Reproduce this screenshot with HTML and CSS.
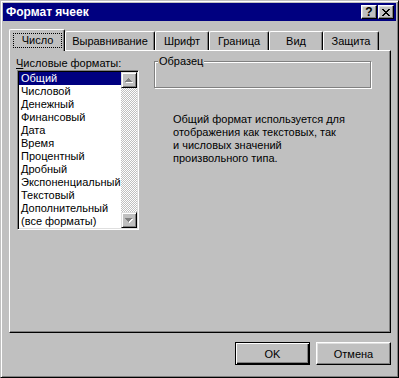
FILE: index.html
```html
<!DOCTYPE html>
<html lang="ru">
<head>
  <meta charset="UTF-8" />
  <title>Формат ячеек</title>
  <link rel="stylesheet" href="styles.css">
</head>
<body>
  <div class="window">
    <div class="titlebar">
      <span class="title">Формат ячеек</span>
      <div class="title-btns">
        <div class="tbtn help">?</div>
        <div class="tbtn">
          <svg width="8" height="7" viewBox="0 0 8 7" shape-rendering="crispEdges">
            <path d="M0 0h2v1H0z M6 0h2v1H6z M1 1h2v1H1z M5 1h2v1H5z M2 2h4v1H2z M3 3h2v1H3z M2 4h4v1H2z M1 5h2v1H1z M5 5h2v1H5z M0 6h2v1H0z M6 6h2v1H6z" fill="#000"/>
          </svg>
        </div>
      </div>
    </div>

    <div class="tabs">
      <div class="tab tab-num active"><span class="focus">Число</span></div>
      <div class="tab tab-align">Выравнивание</div>
      <div class="tab tab-font">Шрифт</div>
      <div class="tab tab-border">Граница</div>
      <div class="tab tab-view">Вид</div>
      <div class="tab tab-protect">Защита</div>
    </div>

    <div class="panel">
      <div class="left">
        <div class="label"><u>Ч</u>исловые форматы:</div>
        <div class="listbox">
          <ul class="items">
            <li class="selected">Общий</li>
            <li>Числовой</li>
            <li>Денежный</li>
            <li>Финансовый</li>
            <li>Дата</li>
            <li>Время</li>
            <li>Процентный</li>
            <li>Дробный</li>
            <li>Экспоненциальный</li>
            <li>Текстовый</li>
            <li>Дополнительный</li>
            <li>(все форматы)</li>
          </ul>
          <div class="scrollbar">
            <div class="sbtn">
              <svg width="8" height="5" viewBox="0 0 8 5" shape-rendering="crispEdges">
                <path d="M4 1h1v1H4z M3 2h3v1H3z M2 3h5v1H2z M1 4h7v1H1z" fill="#fff"/>
                <path d="M3 0h1v1H3z M2 1h3v1H2z M1 2h5v1H1z M0 3h7v1H0z" fill="#808080"/>
              </svg>
            </div>
            <div class="track"></div>
            <div class="sbtn">
              <svg width="8" height="5" viewBox="0 0 8 5" shape-rendering="crispEdges">
                <path d="M1 1h7v1H1z M2 2h5v1H2z M3 3h3v1H3z M4 4h1v1H4z" fill="#fff"/>
                <path d="M0 0h7v1H0z M1 1h5v1H1z M2 2h3v1H2z M3 3h1v1H3z" fill="#808080"/>
              </svg>
            </div>
          </div>
        </div>
      </div>

      <div class="right">
        <div class="group">
          <span class="group-label">Образец</span>
        </div>
        <p class="descr">
          Общий формат используется для<br>
          отображения как текстовых, так<br>
          и числовых значений<br>
          произвольного типа.
        </p>
      </div>
    </div>

    <div class="buttons">
      <div class="btn default">OK</div>
      <div class="btn">Отмена</div>
    </div>
  </div>
</body>
</html>
```

FILE: styles.css
```css
body {
  margin: 0;
  background: #c0c0c0;
  font-family: "Liberation Sans", Arial, sans-serif;
  font-size: 11px;
  color: #000;
}
.window {
  width: 399px;
  height: 378px;
  box-sizing: border-box;
  padding: 2px;
  background: #c0c0c0;
  border: 1px solid;
  border-color: #c0c0c0 #000 #000 #c0c0c0;
  box-shadow: inset 1px 1px #fff, inset -1px -1px #808080;
  display: flex;
  flex-direction: column;
}
.titlebar {
  height: 18px;
  background: #000080;
  display: flex;
  align-items: center;
  justify-content: space-between;
  padding: 0 2px 0 3px;
}
.title {
  color: #fff;
  font-weight: bold;
  font-size: 12px;
}
.title-btns {
  display: flex;
  gap: 1px;
}
.tbtn {
  width: 16px;
  height: 14px;
  box-sizing: border-box;
  background: #c0c0c0;
  border: 1px solid;
  border-color: #fff #000 #000 #fff;
  box-shadow: inset -1px -1px #808080, inset 1px 1px #dfdfdf;
  display: flex;
  align-items: center;
  justify-content: center;
}
.help {
  font-weight: bold;
  font-size: 12px;
  line-height: 12px;
}

/* tabs */
.tabs {
  display: flex;
  height: 19px;
  margin: 10px 0 0 6px;
  position: relative;
  z-index: 1;
}
.tab {
  height: 19px;
  box-sizing: border-box;
  border: 1px solid;
  border-bottom: none;
  border-color: #fff #000 #000 #fff;
  border-radius: 2px 2px 0 0;
  box-shadow: inset -1px 0 #808080;
  text-align: center;
  padding-top: 3px;
  line-height: 13px;
  background: #c0c0c0;
}
.tab-num { width: 56px; }
.tab-align { width: 90px; }
.tab-font { width: 54px; }
.tab-border { width: 60px; }
.tab-view { width: 54px; }
.tab-protect { width: 56px; }
.tab.active {
  height: 22px;
  margin-top: -2px;
  padding: 3px 0 0 3px;
  text-align: left;
}
.focus {
  display: block;
  width: 49px;
  height: 15px;
  box-sizing: border-box;
  border: 1px dotted #000;
  text-align: center;
  line-height: 13px;
}

/* page */
.panel {
  height: 283px;
  width: 382px;
  box-sizing: border-box;
  margin-left: 6px;
  border: 1px solid;
  border-color: #fff #000 #000 #fff;
  box-shadow: inset -1px -1px #808080;
  padding: 6px 0 0 6px;
  display: flex;
  gap: 15px;
}
.left {
  width: 123px;
}
.label {
  line-height: 13px;
}
.listbox {
  margin-left: 1px;
  width: 122px;
  height: 160px;
  box-sizing: border-box;
  border: 1px solid;
  border-color: #808080 #fff #fff #808080;
  box-shadow: inset 1px 1px #000, inset -1px -1px #dfdfdf;
  padding: 1px;
  background: #fff;
  display: flex;
}
.items {
  list-style: none;
  margin: 0;
  padding: 0;
  width: 102px;
}
.items li {
  height: 13px;
  line-height: 13px;
  padding-left: 2px;
  white-space: nowrap;
}
.items li.selected {
  background: #000080;
  color: #fff;
}
.scrollbar {
  width: 16px;
  display: flex;
  flex-direction: column;
}
.sbtn {
  width: 16px;
  height: 16px;
  box-sizing: border-box;
  background: #c0c0c0;
  border: 1px solid;
  border-color: #dfdfdf #000 #000 #dfdfdf;
  box-shadow: inset 1px 1px #fff, inset -1px -1px #808080;
  display: flex;
  align-items: center;
  justify-content: center;
}
.track {
  flex: 1;
  background-image: conic-gradient(#fff 25%, #c0c0c0 0 50%, #fff 0 75%, #c0c0c0 0);
  background-size: 2px 2px;
}
.right {
  width: 218px;
  padding-top: 4px;
}
.group {
  width: 217px;
  height: 27px;
  box-sizing: border-box;
  border: 1px solid #808080;
  box-shadow: inset 1px 1px #fff, 1px 1px #fff;
}
.group-label {
  display: inline-block;
  margin: -7px 0 0 3px;
  padding: 0 1px;
  line-height: 13px;
  background: #c0c0c0;
  vertical-align: top;
}
.descr {
  margin: 25px 0 0 19px;
  line-height: 13px;
}

/* buttons */
.buttons {
  display: flex;
  justify-content: flex-end;
  gap: 6px;
  margin: 9px 5px 0 0;
}
.btn {
  width: 75px;
  height: 23px;
  box-sizing: border-box;
  border: 1px solid;
  border-color: #fff #000 #000 #fff;
  box-shadow: inset -1px -1px #808080, inset 1px 1px #dfdfdf;
  display: flex;
  align-items: center;
  justify-content: center;
}
.btn.default {
  border-color: #000;
  box-shadow: inset 1px 1px #fff, inset -1px -1px #000, inset -2px -2px #808080;
}
```
